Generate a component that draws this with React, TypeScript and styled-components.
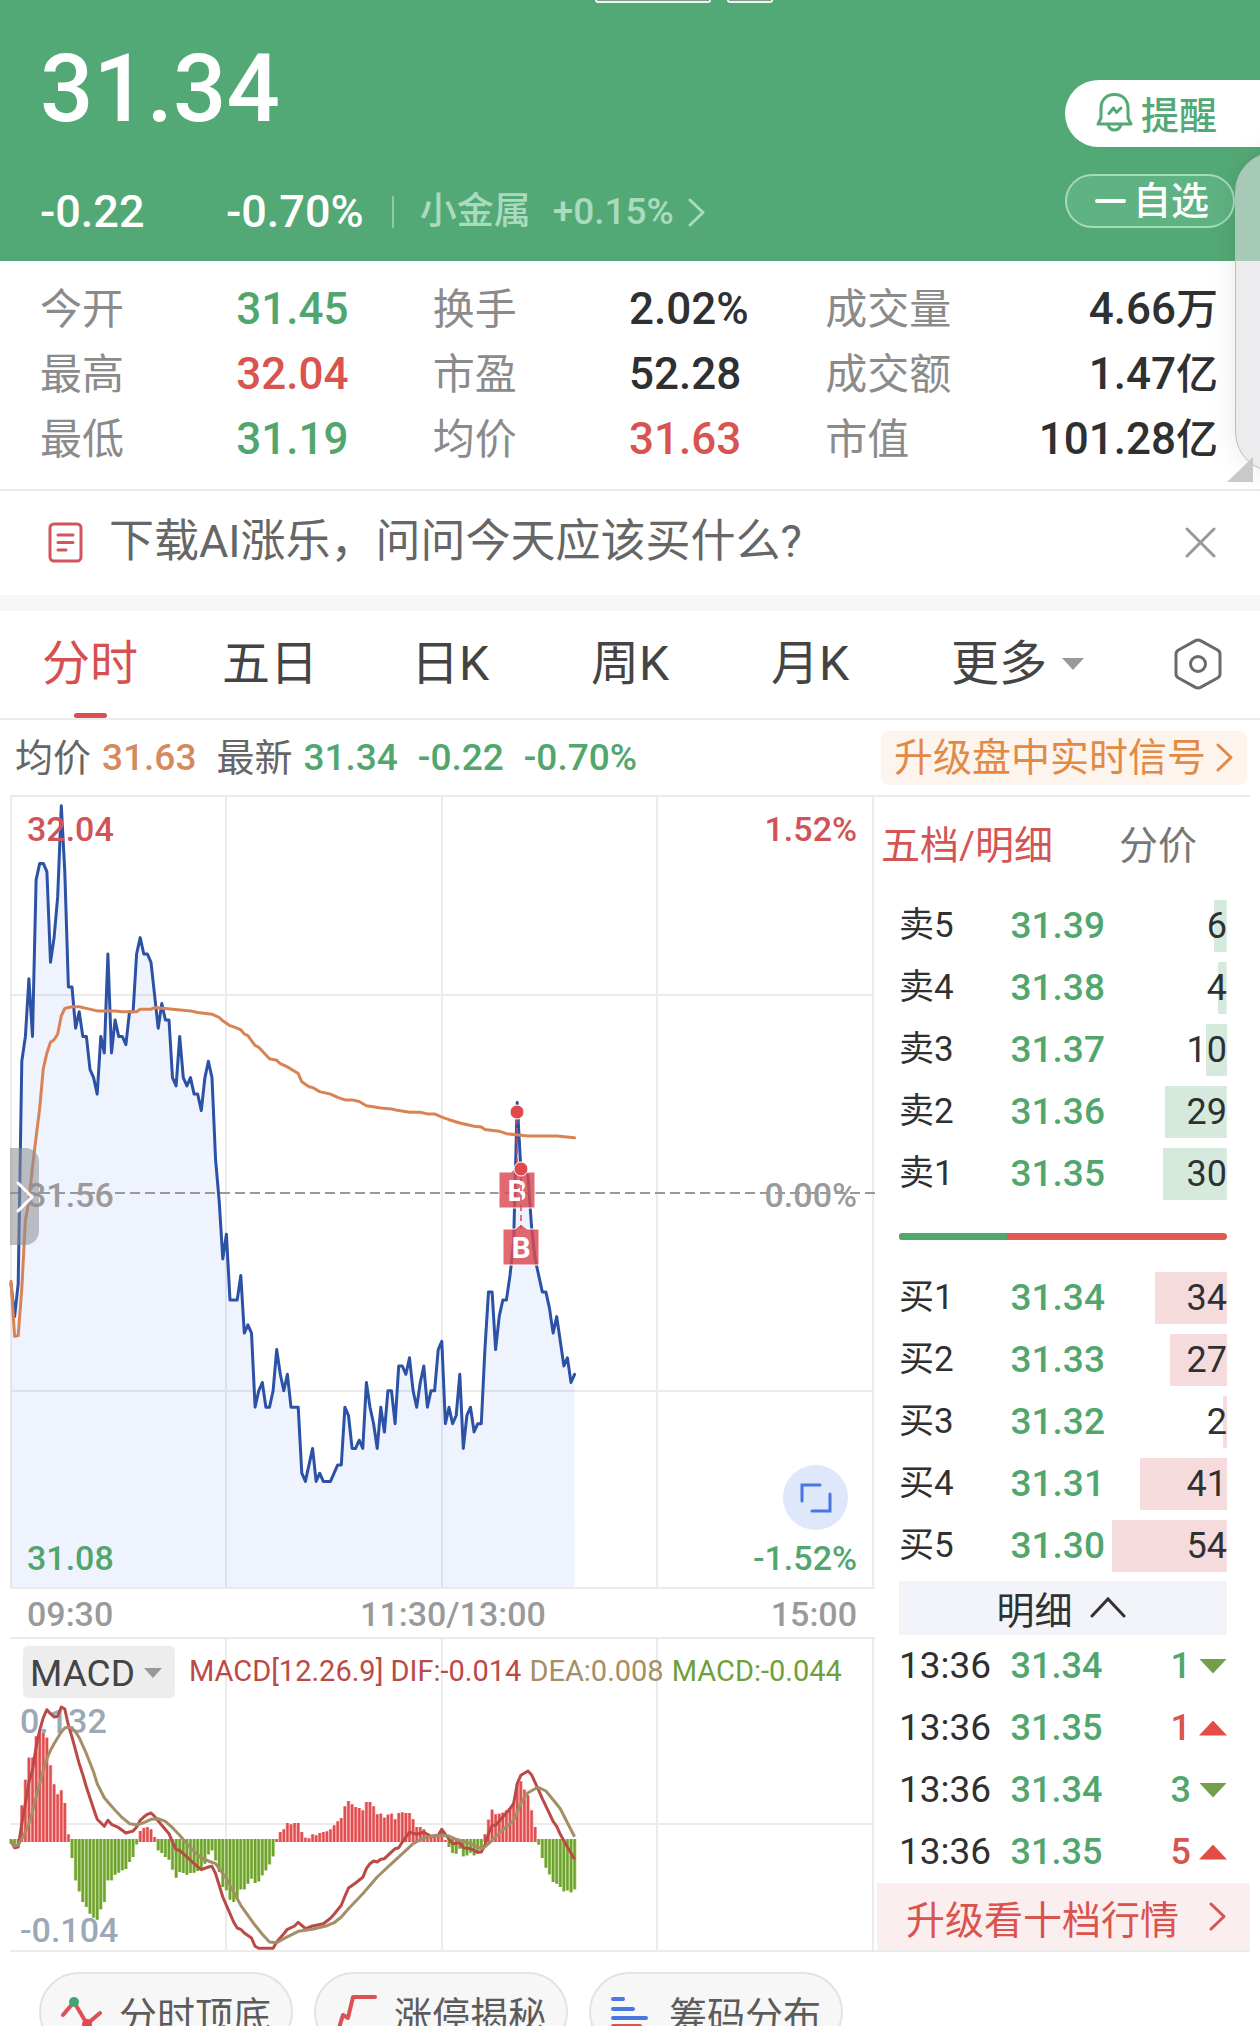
import React from "react";
import styled, { createGlobalStyle } from "styled-components";

const color = {
  header: "#53a975",
  up: "#d9534f",
  down: "#51a66e",
  ink: "#2f3031",
  label: "#8b8b8b",
  line: "#ebebeb",
  dif: "#bb4a46",
  dea: "#a48e66",
  macd: "#6f9f3a",
  orange: "#d68a5c",
};

const GlobalStyle = createGlobalStyle`
  *, *::before, *::after { box-sizing: border-box; }
  body {
    margin: 0;
    background: #fff;
    font-family: Roboto, "Noto Sans CJK SC", sans-serif;
    color: ${color.ink};
  }
  button {
    margin: 0;
    padding: 0;
    border: 0;
    background: none;
    font: inherit;
    color: inherit;
    cursor: pointer;
  }
  dl, dd, dt, p, h1 { margin: 0; font-weight: inherit; }
  a { color: inherit; text-decoration: none; }
  svg { display: block; }
`;

const Page = styled.main`
  position: relative;
  height: 100vh;
  overflow: hidden;
`;

/* ---------- header ---------- */

const Header = styled.header`
  background: ${color.header};
  color: #fff;
`;

const TagStrip = styled.div`
  display: flex;
  align-items: flex-end;
  justify-content: center;
  gap: 16px;
  height: 3px;
  padding-left: 108px;
`;

const TagEdge = styled.span<{ $wide?: boolean }>`
  width: ${(p) => (p.$wide ? 116 : 46)}px;
  height: 3px;
  border: 2px solid #eaf6ef;
  border-top: 0;
  border-radius: 0 0 4px 4px;
  background: #7f9c8b;
`;

const HeaderMain = styled.div`
  display: flex;
  justify-content: space-between;
  padding-left: 40px;
`;

const Quote = styled.div`
  padding: 38px 0 19px;
`;

const Price = styled.h1`
  font-size: 94px;
  line-height: 96px;
  font-weight: 500;
`;

const ChangeRow = styled.div`
  display: flex;
  align-items: center;
  margin-top: 45px;
  font-size: 45px;
  line-height: 60px;
  font-weight: 500;
`;

const Change = styled.span`
  min-width: 186px;
`;

const Sector = styled.a`
  display: flex;
  align-items: center;
  gap: 22px;
  margin-left: 28px;
  padding-left: 28px;
  font-size: 37px;
  color: #aadbbe;
  background: linear-gradient(#8fcba8, #8fcba8) left center / 2px 32px no-repeat;
  svg { margin-left: -8px; }
`;

const Actions = styled.div`
  display: flex;
  flex-direction: column;
  align-items: flex-start;
  gap: 27px;
  padding-top: 77px;
`;

const RemindButton = styled.button`
  display: flex;
  align-items: center;
  gap: 8px;
  height: 67px;
  padding: 0 43px 3px 31px;
  border-radius: 34px 0 0 34px;
  background: #fff;
  color: ${color.header};
  font-size: 38px;
  font-weight: 500;
`;

const WatchButton = styled.button`
  display: flex;
  align-items: center;
  gap: 7px;
  height: 54px;
  padding: 0 24px 0 28px;
  border: 2px solid #a6dabb;
  border-radius: 27px;
  background: #5fb281;
  font-size: 38px;
  line-height: 50px;
  font-weight: 500;
`;

const Minus = styled.span`
  width: 31px;
  height: 4px;
  border-radius: 2px;
  background: #fff;
`;

/* ---------- edge handle of the floating side panel ---------- */

const EdgeClip = styled.div`
  position: absolute;
  z-index: 3;
  top: 130px;
  right: 0;
  width: 60px;
  height: 370px;
  overflow: hidden;
  pointer-events: none;
`;

const EdgePanel = styled.div`
  width: 100px;
  height: 320px;
  margin: 22px 0 0 35px;
  border: 1px solid #b9bdbb;
  border-radius: 40px;
  background: rgba(223, 224, 227, 0.6);
  box-shadow: 0 0 30px rgba(0, 0, 0, 0.09);
`;

const Corner = styled.div`
  width: 26px;
  height: 25px;
  margin: -15px 0 0 27px;
  background: #c9c9ca;
  clip-path: polygon(100% 0, 100% 100%, 0 100%);
`;

/* ---------- statistics ---------- */

const Stats = styled.dl`
  display: grid;
  grid-template-columns: repeat(3, 1fr);
  grid-auto-rows: 65px;
  padding: 16px 42px 17px 40px;
  border-bottom: 2px solid ${color.line};
`;

const Stat = styled.div<{ $last?: boolean }>`
  display: grid;
  grid-template-columns: ${(p) => (p.$last ? "auto 1fr" : "1fr 1fr")};
  line-height: 65px;
  dt { font-size: 42px; color: ${color.label}; }
  dd { text-align: ${(p) => (p.$last ? "right" : "left")}; }
`;

const StatValue = styled.dd<{ $tone: string }>`
  font-size: 44px;
  font-weight: 500;
  white-space: nowrap;
  color: ${(p) => p.$tone};
`;

const Unit = styled.span`
  font-size: 42px;
`;

/* ---------- notice ---------- */

const Notice = styled.section`
  display: flex;
  align-items: center;
  height: 104px;
  padding: 0 44px 2px 48px;
`;

const NoticeText = styled.p`
  flex: 1;
  margin-left: 26px;
  font-size: 45px;
  line-height: 60px;
  color: #666;
`;

const Band = styled.div`
  height: 16px;
  background: #f7f7f7;
`;

/* ---------- period tabs ---------- */

const Periods = styled.nav`
  display: grid;
  grid-template-columns: repeat(5, 1fr) 2fr;
  height: 109px;
  border-bottom: 2px solid ${color.line};
`;

const Period = styled.button<{ $active?: boolean }>`
  display: flex;
  flex-direction: column;
  align-items: center;
  padding-top: 23px;
  font-size: 48px;
  line-height: 60px;
  color: ${(p) => (p.$active ? "#d84f50" : "#444")};
  &::after {
    content: "";
    width: 33px;
    height: 5px;
    margin-top: auto;
    border-radius: 3px;
    background: ${(p) => (p.$active ? "#d84f50" : "transparent")};
  }
`;

const PeriodEnd = styled.div`
  display: flex;
  align-items: center;
  justify-content: space-between;
  padding: 0 38px 1px 51px;
`;

const MoreButton = styled.button`
  display: flex;
  align-items: center;
  gap: 15px;
  font-size: 48px;
  line-height: 60px;
  color: #444;
`;

const Caret = styled.span<{ $size: number; $tone: string }>`
  width: ${(p) => p.$size * 2}px;
  height: ${(p) => p.$size + 1}px;
  background: ${(p) => p.$tone};
  clip-path: polygon(0 0, 100% 0, 50% 100%);
`;

/* ---------- latest line ---------- */

const Latest = styled.div`
  display: flex;
  align-items: center;
  justify-content: space-between;
  height: 75px;
  padding: 0 13px 0 15px;
  font-size: 38px;
  line-height: 54px;
`;

const LatestValues = styled.p`
  display: flex;
  align-items: center;
  gap: 11px;
  color: #666;
`;

const Figure = styled.span<{ $tone: string; $space?: boolean }>`
  margin-right: ${(p) => (p.$space ? 9 : 0)}px;
  font-size: 37px;
  font-weight: 500;
  color: ${(p) => p.$tone};
`;

const SignalLink = styled.a`
  display: flex;
  align-items: center;
  gap: 10px;
  height: 54px;
  padding: 0 14px 0 13px;
  border-radius: 8px;
  background: #fdf4ee;
  color: #e28a45;
  font-size: 39px;
`;

/* ---------- trading area ---------- */

const Trading = styled.section`
  display: grid;
  grid-template-columns: minmax(0, 865fr) minmax(0, 375fr);
  margin: 0 10px;
  border-top: 2px solid ${color.line};
  border-bottom: 2px solid ${color.line};
`;

const Charts = styled.div``;

const ChartBox = styled.div`
  position: relative;
`;

const ChartSvg = styled.svg`
  width: 100%;
  height: auto;
  overflow: visible;
`;

const AxisText = styled.text`
  font-size: 34px;
  font-weight: 500;
`;

const CollapseButton = styled.button`
  position: absolute;
  top: 351px;
  left: 0;
  display: flex;
  align-items: center;
  justify-content: center;
  width: 29px;
  height: 97px;
  border-radius: 0 14px 14px 0;
  background: rgba(140, 140, 144, 0.55);
`;

const FullButton = styled.button`
  position: absolute;
  right: 27px;
  bottom: 109px;
  display: flex;
  align-items: center;
  justify-content: center;
  width: 65px;
  height: 65px;
  border-radius: 50%;
  background: #dfe7fb;
`;

const MacdHead = styled.div`
  position: absolute;
  top: 7px;
  left: 13px;
  display: flex;
  align-items: center;
  gap: 14px;
`;

const MacdButton = styled.button`
  display: flex;
  align-items: center;
  gap: 9px;
  height: 52px;
  padding: 2px 13px 0 7px;
  border-radius: 5px;
  background: #ededed;
  font-size: 37px;
  color: #444;
`;

const MacdLegend = styled.p`
  display: flex;
  gap: 8px;
  padding-bottom: 2px;
  font-size: 29px;
  line-height: 40px;
  white-space: nowrap;
`;

const Tint = styled.span<{ $tone: string }>`
  color: ${(p) => p.$tone};
`;

/* ---------- order book ---------- */

const Book = styled.aside`
  display: flex;
  flex-direction: column;
`;

const BookTabs = styled.div`
  display: flex;
  align-items: center;
  gap: 66px;
  height: 98px;
  padding: 0 0 1px 6px;
`;

const BookTab = styled.button<{ $active?: boolean }>`
  font-size: 39px;
  line-height: 56px;
  color: ${(p) => (p.$active ? "#d45454" : "#777")};
`;

const BookBody = styled.div`
  padding: 0 23px 0 24px;
`;

const Ladder = styled.table`
  width: 100%;
  table-layout: fixed;
  border-collapse: collapse;
  th, td {
    height: 62px;
    padding: 0;
    text-align: left;
    font-weight: 400;
    line-height: 52px;
    white-space: nowrap;
  }
  th { width: 34%; font-size: 35px; }
  td { font-size: 36px; }
  td:last-child { width: 35%; text-align: right; }
`;

const LevelPrice = styled.td`
  && { font-size: 37px; font-weight: 500; }
  color: ${color.down};
`;

const Volume = styled.div<{ $side: "sell" | "buy" }>`
  height: 52px;
  background-image: ${(p) =>
    p.$side === "sell"
      ? "linear-gradient(#d5eadd, #d5eadd)"
      : "linear-gradient(#f6dbdd, #f6dbdd)"};
  background-repeat: no-repeat;
  background-position: right center;
`;

const RatioRow = styled.div`
  display: flex;
  align-items: center;
  height: 62px;
`;

const Ratio = styled.div`
  display: flex;
  width: 100%;
  height: 7px;
  overflow: hidden;
  border-radius: 4px;
  background: #e25a54;
`;

const RatioSell = styled.span`
  width: 33%;
  background: #50a96b;
`;

const DetailButton = styled.button`
  display: flex;
  align-items: center;
  justify-content: center;
  gap: 17px;
  width: 100%;
  height: 54px;
  margin-top: 4px;
  padding: 0 4px 2px 0;
  background: #f2f4f9;
  font-size: 38px;
`;

const Trades = styled.table`
  width: 100%;
  table-layout: fixed;
  border-collapse: collapse;
  td {
    height: 62px;
    padding: 0;
    font-size: 37px;
    line-height: 52px;
    white-space: nowrap;
  }
  td:first-child { width: 34%; }
  td:nth-child(2) { font-size: 36px; font-weight: 500; color: ${color.down}; }
  td:last-child { width: 30%; }
`;

const TradeVolume = styled.div<{ $up: boolean }>`
  display: flex;
  align-items: center;
  justify-content: flex-end;
  gap: 8px;
  font-size: 36px;
  font-weight: 500;
  color: ${(p) => (p.$up ? color.up : color.down)};
`;

const Direction = styled.span<{ $up: boolean }>`
  width: 28px;
  height: 15px;
  background: ${(p) => (p.$up ? "#e24e45" : "#719f4c")};
  clip-path: ${(p) =>
    p.$up ? "polygon(50% 0, 100% 100%, 0 100%)" : "polygon(0 0, 100% 0, 50% 100%)"};
`;

const UpgradeLink = styled.a`
  display: flex;
  flex: 1;
  align-items: center;
  justify-content: space-between;
  min-height: 64px;
  margin-left: 2px;
  padding: 0 24px 0 29px;
  background: #fbeeee;
  color: ${color.up};
  font-size: 39px;
`;

/* ---------- shortcuts ---------- */

const Shortcuts = styled.nav`
  display: flex;
  gap: 21px;
  padding: 20px 39px;
`;

const Shortcut = styled.button`
  display: flex;
  align-items: center;
  gap: 17px;
  height: 80px;
  padding: 0 20px 0 19px;
  border: 2px solid #e3e3e3;
  border-radius: 40px;
  background: #f7f7f7;
  font-size: 38px;
  color: #5c5c5c;
`;

/* ---------- icons ---------- */

const Chevron = ({ w, h, tone, weight = 3 }: { w: number; h: number; tone: string; weight?: number }) => (
  <svg width={w + 4} height={h + 4} viewBox={`-2 -2 ${w + 4} ${h + 4}`} fill="none" stroke={tone} strokeWidth={weight} strokeLinecap="round" strokeLinejoin="round" aria-hidden="true">
    <path d={`M0 0 L${w} ${h / 2} L0 ${h}`} />
  </svg>
);

const BellIcon = () => (
  <svg width="37" height="40" viewBox="0 0 37 40" fill="none" stroke={color.header} strokeWidth="3" strokeLinejoin="round" strokeLinecap="round" aria-hidden="true">
    <path d="M5 26V16C5 8 10.500 2.500 18.500 2.500S32 8 32 16V26L35 32H2Z" />
    <path d="M12 32.500C13 36 15.500 38 18.500 38S24 36 25 32.500" />
    <path d="M13 21.500L17.500 16L20.500 20.500L25 16" />
  </svg>
);

const NoteIcon = () => (
  <svg width="35" height="41" viewBox="0 0 35 41" fill="none" stroke="#d2555a" strokeWidth="3" strokeLinecap="round" aria-hidden="true">
    <rect x="2" y="2" width="31" height="37" rx="4" />
    <path d="M10 13H25M10 20.500H25M10 28H18" />
  </svg>
);

const CloseIcon = () => (
  <svg width="31" height="31" viewBox="0 0 31 31" stroke="#999" strokeWidth="3" strokeLinecap="round" aria-hidden="true">
    <path d="M2 2L29 29M29 2L2 29" />
  </svg>
);

const HexIcon = () => (
  <svg width="48" height="52" viewBox="0 0 48 52" fill="none" stroke="#6a6a6a" strokeWidth="3" strokeLinejoin="round" aria-hidden="true">
    <path d="M21.500 2.600Q24 1.300 26.500 2.600L43.500 12Q46 13.500 46 16V36Q46 38.500 43.500 40L26.500 49.400Q24 50.700 21.500 49.400L4.500 40Q2 38.500 2 36V16Q2 13.500 4.500 12Z" />
    <circle cx="24" cy="26" r="7.500" />
  </svg>
);

const FullIcon = () => (
  <svg width="32" height="32" viewBox="0 0 32 32" fill="none" stroke="#4877e2" strokeWidth="3" strokeLinecap="round" aria-hidden="true">
    <path d="M2 19V3H20M30 12V29H12" />
  </svg>
);

const TurnIcon = () => (
  <svg width="42" height="42" viewBox="0 0 42 42" fill="none" stroke="#dd5055" strokeWidth="4" strokeLinecap="round" strokeLinejoin="round" aria-hidden="true">
    <path d="M3 24L14 11L27 33L40 22" />
    <circle cx="14" cy="11" r="5" fill="#43a572" stroke="none" />
    <circle cx="27" cy="33" r="5" fill="#e24a52" stroke="none" />
  </svg>
);

const LimitIcon = () => (
  <svg width="42" height="42" viewBox="0 0 42 42" fill="none" stroke="#dd5055" strokeWidth="4" strokeLinecap="round" strokeLinejoin="round" aria-hidden="true">
    <path d="M3 40L8 24L13 27L18 6H40" />
  </svg>
);

const ChipIcon = () => (
  <svg width="42" height="42" viewBox="0 0 42 42" fill="none" stroke="#4b78de" strokeWidth="4" strokeLinecap="round" aria-hidden="true">
    <path d="M3 8H13M3 18H23M3 27H36" />
    <path d="M3 35H30" stroke="#dd5055" />
  </svg>
);

/* ---------- data ---------- */

/* Price of each minute, in hundredths away from the previous close 31.56. */
const priceCents = [
  -11, -15, -11, 16, 19, 26, 19, 38, 40, 40, 39, 28, 31, 36, 47, 39, 25, 25, 20, 22,
  19, 19, 15, 14, 12, 19, 17, 29, 17, 21, 19, 19, 18, 22, 22, 29, 31, 29, 29, 28,
  24, 20, 23, 21, 21, 14, 13, 19, 14, 13, 14, 12, 12, 10, 14, 16, 14, 4, -1, -8,
  -5, -13, -13, -13, -10, -17, -16, -17, -26, -24, -23, -26, -26, -24, -19, -22, -24, -22, -26, -26,
  -26, -34, -35, -33, -31, -35, -34, -35, -35, -35, -34, -33, -33, -26, -27, -31, -31, -30, -31, -23,
  -26, -28, -31, -26, -29, -24, -24, -28, -21, -21, -22, -20, -24, -26, -23, -21, -26, -24, -24, -19,
  -18, -28, -26, -28, -27, -22, -31, -27, -26, -29, -28, -28, -19, -12, -12, -19, -15, -13, -13, -10,
  -6, 11, 3, 3, 2, -4, -8, -10, -12, -12, -14, -17, -15, -18, -21, -20, -23, -22,
];

/* Average price: minute and hundredths away from the previous close. */
const average: [number, number][] = [
  [0, -10.7], [1, -17.4], [2, -17.3], [3, -11.6], [4, -3.3], [5, -1], [6, 3.2], [7, 6.8], [8, 10.3], [9, 15.1],
  [10, 17], [11, 18.3], [12, 18.6], [13, 19.3], [14, 21.5], [15, 22.4], [17, 22.6], [19, 22.6], [21, 22.4], [24, 22.1],
  [29, 22.1], [31, 22], [35, 22], [36, 22.3], [39, 22.3], [40, 22.5], [45, 22.3], [50, 22.1], [52, 21.9], [56, 21.7],
  [58, 21.3], [59, 20.9], [61, 20.3], [63, 20], [64, 19.8], [65, 19.3], [66, 19.1], [68, 17.9], [69, 17.7], [72, 16.3],
  [74, 16.1], [75, 15.7], [77, 15.3], [80, 14.5], [81, 13.5], [83, 12.9], [84, 12.8], [86, 12.3], [89, 12], [91, 11.6],
  [93, 11.3], [95, 11.3], [97, 11.1], [99, 10.6], [103, 10.3], [106, 10.2], [108, 10], [111, 9.8], [114, 9.8], [116, 9.6],
  [118, 9.6], [120, 9.2], [122, 8.9], [125, 8.5], [129, 8.1], [131, 8], [132, 7.7], [136, 7.5], [138, 7.2], [144, 6.9],
  [152, 6.9], [157, 6.7],
];

const macdBars = [
  -8, -20, -12, 107, 184, 250, 250, 314, 332, 324, 310, 227, 170, 140, 152, 114, 20, -51, -118, -151,
  -183, -198, -218, -230, -236, -205, -183, -118, -118, -101, -95, -88, -84, -63, -48, -10, 30, 39, 42, 35,
  12, -28, -36, -48, -56, -86, -110, -93, -96, -101, -96, -95, -90, -86, -68, -40, -28, -58, -93, -138,
  -148, -176, -183, -173, -145, -145, -128, -113, -126, -121, -103, -88, -70, -46, 6, 27, 35, 54, 50, 54,
  54, 27, 10, 8, 20, 17, 24, 27, 29, 35, 47, 59, 69, 104, 120, 110, 102, 99, 92, 117,
  117, 104, 80, 82, 70, 79, 82, 65, 84, 86, 84, 84, 65, 42, 42, 35, 22, 14, 12, 20,
  32, 3, -18, -36, -38, -23, -46, -43, -35, -43, -38, -23, 20, 64, 94, 80, 82, 85, 92, 99,
  112, 172, 179, 154, 137, 92, 42, -11, -51, -80, -100, -123, -128, -138, -151, -148, -154, -145,
];

const difLine: [number, number][] = [
  [0, 0], [1, -20], [2, -18], [3, 52], [4, 112], [5, 177], [6, 212], [7, 282], [8, 332], [9, 370],
  [10, 394], [11, 382], [12, 372], [13, 374], [14, 402], [15, 396], [16, 347], [17, 312], [18, 272], [19, 232],
  [20, 199], [21, 162], [22, 129], [23, 97], [24, 65], [26, 44], [27, 62], [28, 50], [30, 40], [32, 24],
  [34, 30], [35, 42], [36, 62], [37, 72], [38, 80], [39, 84], [40, 74], [41, 60], [42, 47], [44, 22],
  [45, -3], [46, -26], [47, -28], [48, -38], [51, -68], [53, -86], [55, -78], [56, -76], [57, -98], [58, -133],
  [59, -168], [60, -193], [61, -218], [62, -243], [63, -261], [64, -265], [65, -276], [67, -291], [68, -316], [69, -322],
  [73, -322], [74, -303], [76, -278], [77, -265], [79, -255], [80, -244], [81, -253], [82, -263], [84, -255], [87, -248],
  [89, -232], [90, -220], [92, -193], [93, -166], [94, -141], [96, -126], [98, -109], [99, -83], [100, -68], [101, -60],
  [102, -63], [103, -55], [104, -53], [107, -23], [108, -20], [109, -3], [111, 26], [113, 20], [115, 26], [117, 14],
  [119, 17], [120, 35], [121, 20], [123, -8], [125, -5], [126, -20], [128, -23], [130, -34], [131, -33], [132, -13],
  [133, 22], [134, 47], [135, 47], [137, 72], [139, 97], [140, 112], [141, 172], [142, 197], [144, 210], [145, 199],
  [147, 152], [148, 127], [150, 82], [151, 59], [152, 44], [153, 20], [155, -18], [157, -55],
];

const deaLine: [number, number][] = [
  [0, 0], [1, -15], [2, -12], [3, 7], [4, 27], [5, 52], [6, 87], [7, 132], [8, 172], [9, 212],
  [10, 247], [11, 272], [12, 292], [13, 310], [14, 327], [15, 339], [16, 342], [17, 337], [18, 327], [19, 310],
  [21, 262], [23, 207], [24, 172], [26, 130], [27, 117], [29, 92], [31, 70], [33, 52], [35, 49], [37, 55],
  [39, 65], [41, 67], [43, 59], [45, 40], [47, 17], [49, -8], [51, -31], [53, -51], [55, -60], [57, -68],
  [58, -83], [60, -113], [62, -153], [64, -193], [66, -223], [68, -253], [70, -280], [72, -303], [74, -305], [76, -293],
  [80, -271], [84, -265], [88, -254], [90, -245], [92, -228], [94, -203], [98, -158], [102, -108], [106, -68], [110, -28],
  [112, -8], [114, 4], [116, 12], [120, 17], [122, 15], [124, 5], [128, -8], [131, -23], [132, -18], [134, 2],
  [137, 34], [140, 62], [142, 112], [143, 132], [144, 145], [146, 157], [147, 160], [149, 150], [151, 124], [153, 97],
  [155, 55], [157, 13],
];

const stats = [
  { name: "今开", value: "31.45", tone: color.down },
  { name: "换手", value: "2.02%", tone: color.ink },
  { name: "成交量", value: "4.66", unit: "万", tone: color.ink },
  { name: "最高", value: "32.04", tone: color.up },
  { name: "市盈", value: "52.28", tone: color.ink },
  { name: "成交额", value: "1.47", unit: "亿", tone: color.ink },
  { name: "最低", value: "31.19", tone: color.down },
  { name: "均价", value: "31.63", tone: color.up },
  { name: "市值", value: "101.28", unit: "亿", tone: color.ink },
];

const sells: [string, string, number][] = [
  ["卖5", "31.39", 6],
  ["卖4", "31.38", 4],
  ["卖3", "31.37", 10],
  ["卖2", "31.36", 29],
  ["卖1", "31.35", 30],
];

const buys: [string, string, number][] = [
  ["买1", "31.34", 34],
  ["买2", "31.33", 27],
  ["买3", "31.32", 2],
  ["买4", "31.31", 41],
  ["买5", "31.30", 54],
];

const trades = [
  { time: "13:36", price: "31.34", volume: 1, up: false },
  { time: "13:36", price: "31.35", volume: 1, up: true },
  { time: "13:36", price: "31.34", volume: 3, up: false },
  { time: "13:36", price: "31.35", volume: 5, up: true },
];

/* ---------- charts ---------- */

const minuteX = (i: number) => 1 + i * 3.59;
const priceY = (c: number) => 396 - c * 8.24;
const macdY = (v: number) => 202 - v / 3;
const toPoints = (data: [number, number][], y: (v: number) => number) =>
  data.map(([i, v]) => `${minuteX(i).toFixed(1)},${y(v).toFixed(1)}`).join(" ");

const Marker = ({ x, dotY, boxY }: { x: number; dotY: number; boxY: number }) => (
  <g>
    <line x1={x} x2={x} y1={dotY + 6} y2={boxY} stroke="#dd4a50" strokeWidth="1.500" strokeDasharray="6 4" />
    <path
      d={`M${x - 18} ${boxY}H${x - 6}L${x} ${boxY - 5}L${x + 6} ${boxY}H${x + 18}V${boxY + 36}H${x - 18}Z`}
      fill="#dc4850"
      fillOpacity="0.82"
      stroke="#fff"
      strokeWidth="1"
    />
    <text x={x} y={boxY + 29} textAnchor="middle" fontSize="30" fontWeight="700" fill="#fff">B</text>
    <circle cx={x} cy={dotY} r="7" fill="#df4a4c" stroke="#fff" strokeWidth="1" />
  </g>
);

const PriceChart = () => {
  const line = toPoints(priceCents.map((c, i) => [i, c] as [number, number]), priceY);
  return (
    <ChartBox>
      <ChartSvg viewBox="0 0 865 842" role="img" aria-label="分时走势">
        <g stroke={color.line} strokeWidth="2">
          <path d="M1 0V791M216 0V791M432 0V791M647 0V791M863 0V791M0 198H863M0 594H863M0 791H865M0 841H865" fill="none" />
        </g>
        <polygon points={`1,790 ${line} ${minuteX(157)},790`} fill="#5c8cf0" fillOpacity="0.1" />
        <path d="M0 396H865" stroke="#999" strokeWidth="2" strokeDasharray="10 5" />
        <AxisText x="17" y="410" fill="#9a9a9a">31.56</AxisText>
        <AxisText x="847" y="410" textAnchor="end" fill="#9a9a9a">0.00%</AxisText>
        <polyline points={line} fill="none" stroke="#2c52a6" strokeWidth="3" strokeLinejoin="round" strokeLinecap="round" />
        <polyline points={toPoints(average, priceY)} fill="none" stroke="#d98355" strokeWidth="3" strokeLinejoin="round" strokeLinecap="round" />
        <AxisText x="17" y="44" fill="#cf5357">32.04</AxisText>
        <AxisText x="847" y="44" textAnchor="end" fill="#cf5357">1.52%</AxisText>
        <AxisText x="17" y="773" fill={color.down}>31.08</AxisText>
        <AxisText x="847" y="773" textAnchor="end" fill={color.down}>-1.52%</AxisText>
        <AxisText x="17" y="829" fill="#9a9a9a">09:30</AxisText>
        <AxisText x="443" y="829" textAnchor="middle" fill="#9a9a9a">11:30/13:00</AxisText>
        <AxisText x="847" y="829" textAnchor="end" fill="#9a9a9a">15:00</AxisText>
        <Marker x={507} dotY={315} boxY={375} />
        <Marker x={511} dotY={372} boxY={432} />
      </ChartSvg>
      <CollapseButton type="button" aria-label="展开">
        <Chevron w={14} h={28} tone="#fff" />
      </CollapseButton>
      <FullButton type="button" aria-label="全屏">
        <FullIcon />
      </FullButton>
    </ChartBox>
  );
};

const MacdChart = () => (
  <ChartBox>
    <ChartSvg viewBox="0 0 865 311" role="img" aria-label="MACD">
      <path d="M216 0V311M432 0V311M647 0V311M863 0V311M0 185H863" fill="none" stroke={color.line} strokeWidth="2" />
      {macdBars.map((v, i) => {
        const top = v > 0 ? macdY(v) : 200;
        const height = v > 0 ? 203 - top : macdY(v) - 200;
        const x = minuteX(i);
        return (
          <g key={i}>
            <rect x={x - 1.8} y={top} width="3.600" height={height} fill={v > 0 ? "#ffa3a3" : "#aed57c"} />
            <rect x={x - 1.1} y={top} width="2.200" height={height} fill={v > 0 ? "#dc4f50" : "#6fa031"} />
          </g>
        );
      })}
      <AxisText x="10" y="94" fill="#9ba8b5">0.132</AxisText>
      <polyline points={toPoints(difLine, macdY)} fill="none" stroke={color.dif} strokeWidth="3" strokeLinejoin="round" />
      <polyline points={toPoints(deaLine, macdY)} fill="none" stroke={color.dea} strokeWidth="3" strokeLinejoin="round" />
      <AxisText x="10" y="303" fill="#9ba8b5">-0.104</AxisText>
    </ChartSvg>
    <MacdHead>
      <MacdButton type="button">
        MACD
        <Caret $size={9} $tone="#999" />
      </MacdButton>
      <MacdLegend>
        <Tint $tone={color.dif}>MACD[12.26.9] DIF:-0.014</Tint>
        <Tint $tone={color.dea}>DEA:0.008</Tint>
        <Tint $tone={color.macd}>MACD:-0.044</Tint>
      </MacdLegend>
    </MacdHead>
  </ChartBox>
);

const Levels = ({ rows, side }: { rows: [string, string, number][]; side: "sell" | "buy" }) => (
  <Ladder>
    <tbody>
      {rows.map(([name, price, volume]) => (
        <tr key={name}>
          <th scope="row">{name}</th>
          <LevelPrice>{price}</LevelPrice>
          <td>
            <Volume $side={side} style={{ backgroundSize: `${(volume / 54) * 100}% 100%` }}>
              {volume}
            </Volume>
          </td>
        </tr>
      ))}
    </tbody>
  </Ladder>
);

export default function App() {
  return (
    <>
      <GlobalStyle />
      <Page>
        <Header>
          <TagStrip>
            <TagEdge $wide />
            <TagEdge />
          </TagStrip>
          <HeaderMain>
            <Quote>
              <Price>31.34</Price>
              <ChangeRow>
                <Change>-0.22</Change>
                <span>-0.70%</span>
                <Sector href="#sector">
                  <span>小金属</span>
                  <span>+0.15%</span>
                  <Chevron w={13} h={25} tone="#aadbbe" />
                </Sector>
              </ChangeRow>
            </Quote>
            <Actions>
              <RemindButton type="button">
                <BellIcon />
                提醒
              </RemindButton>
              <WatchButton type="button">
                <Minus />
                自选
              </WatchButton>
            </Actions>
          </HeaderMain>
        </Header>

        <Stats>
          {stats.map((s) => (
            <Stat key={s.name} $last={Boolean(s.unit)}>
              <dt>{s.name}</dt>
              <StatValue $tone={s.tone}>
                {s.value}
                {s.unit && <Unit>{s.unit}</Unit>}
              </StatValue>
            </Stat>
          ))}
        </Stats>

        <EdgeClip>
          <EdgePanel />
          <Corner />
        </EdgeClip>

        <Notice>
          <NoteIcon />
          <NoticeText>下载AI涨乐，问问今天应该买什么?</NoticeText>
          <button type="button" aria-label="关闭">
            <CloseIcon />
          </button>
        </Notice>
        <Band />

        <Periods>
          <Period type="button" $active>分时</Period>
          <Period type="button">五日</Period>
          <Period type="button">日K</Period>
          <Period type="button">周K</Period>
          <Period type="button">月K</Period>
          <PeriodEnd>
            <MoreButton type="button">
              更多
              <Caret $size={11} $tone="#999" />
            </MoreButton>
            <button type="button" aria-label="设置">
              <HexIcon />
            </button>
          </PeriodEnd>
        </Periods>

        <Latest>
          <LatestValues>
            均价
            <Figure $tone={color.orange} $space>31.63</Figure>
            最新
            <Figure $tone={color.down} $space>31.34</Figure>
            <Figure $tone={color.down} $space>-0.22</Figure>
            <Figure $tone={color.down}>-0.70%</Figure>
          </LatestValues>
          <SignalLink href="#signal">
            升级盘中实时信号
            <Chevron w={13} h={25} tone="#e28a45" />
          </SignalLink>
        </Latest>

        <Trading>
          <Charts>
            <PriceChart />
            <MacdChart />
          </Charts>
          <Book>
            <BookTabs>
              <BookTab type="button" $active>五档/明细</BookTab>
              <BookTab type="button">分价</BookTab>
            </BookTabs>
            <BookBody>
              <Levels rows={sells} side="sell" />
              <RatioRow>
                <Ratio>
                  <RatioSell />
                </Ratio>
              </RatioRow>
              <Levels rows={buys} side="buy" />
              <DetailButton type="button">
                明细
                <svg width="36" height="22" viewBox="0 0 36 22" fill="none" stroke="#333" strokeWidth="3" strokeLinecap="round" aria-hidden="true">
                  <path d="M2 20L18 3L34 20" />
                </svg>
              </DetailButton>
              <Trades>
                <tbody>
                  {trades.map((t, i) => (
                    <tr key={i}>
                      <td>{t.time}</td>
                      <td>{t.price}</td>
                      <td>
                        <TradeVolume $up={t.up}>
                          {t.volume}
                          <Direction $up={t.up} />
                        </TradeVolume>
                      </td>
                    </tr>
                  ))}
                </tbody>
              </Trades>
            </BookBody>
            <UpgradeLink href="#upgrade">
              升级看十档行情
              <Chevron w={13} h={25} tone={color.up} />
            </UpgradeLink>
          </Book>
        </Trading>

        <Shortcuts>
          <Shortcut type="button">
            <TurnIcon />
            分时顶底
          </Shortcut>
          <Shortcut type="button">
            <LimitIcon />
            涨停揭秘
          </Shortcut>
          <Shortcut type="button">
            <ChipIcon />
            筹码分布
          </Shortcut>
        </Shortcuts>
      </Page>
    </>
  );
}
